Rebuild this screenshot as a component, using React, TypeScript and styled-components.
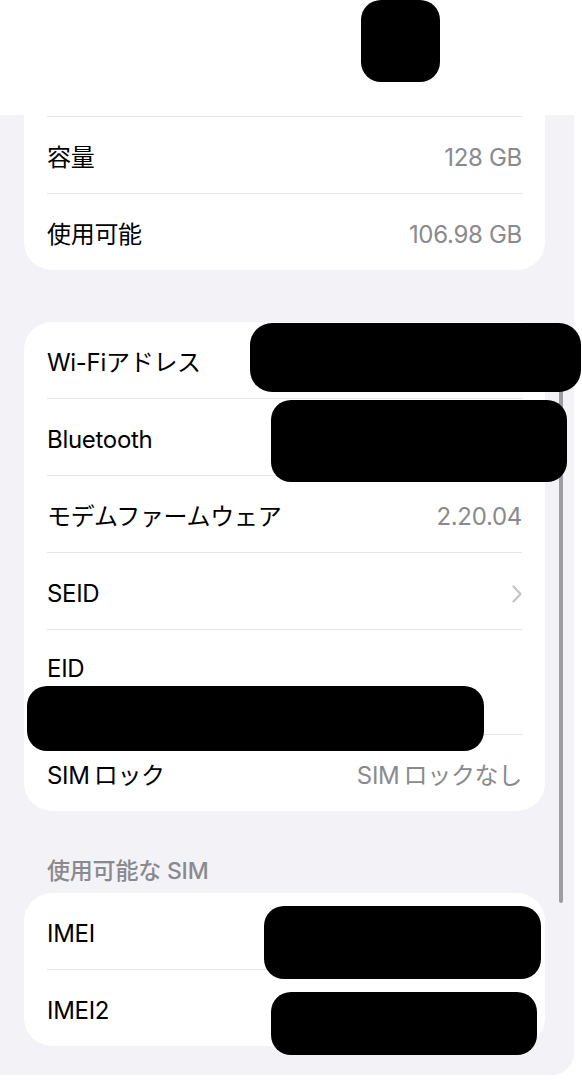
import React from "react";
import styled, { createGlobalStyle } from "styled-components";

const GlobalStyle = createGlobalStyle`
    html, body {
        margin: 0;
        padding: 0;
        background: #fff;
    }
    body {
        font-family: Inter, "Noto Sans CJK JP", sans-serif;
        -webkit-font-smoothing: antialiased;
    }
`;

type Item = { label: string; value?: string; chevron?: boolean; tall?: boolean };

const storage: Item[] = [
    { label: "容量", value: "128 GB" },
    { label: "使用可能", value: "106.98 GB" },
];

const network: Item[] = [
    { label: "Wi-Fiアドレス" },
    { label: "Bluetooth" },
    { label: "モデムファームウェア", value: "2.20.04" },
    { label: "SEID", chevron: true },
    { label: "EID", tall: true },
    { label: "SIM\u2009ロック", value: "SIM\u2009ロックなし" },
];

const sims: Item[] = [{ label: "IMEI" }, { label: "IMEI2" }];

// black boxes that hide private values in the screenshot
const redactions = [
    { left: 361, top: 0, width: 79, height: 82, radius: 20 },
    { left: 250, top: 323, width: 331, height: 69, radius: 22 },
    { left: 271, top: 400, width: 296, height: 82, radius: 20 },
    { left: 27, top: 686, width: 457, height: 65, radius: 20 },
    { left: 264, top: 906, width: 277, height: 73, radius: 20 },
    { left: 271, top: 992, width: 266, height: 63, radius: 20 },
];

const Chevron: React.FC = () => (
    <svg width="10" height="18" viewBox="0 0 10 18" fill="none">
        <path
            d="M1.5 1.5L8.5 9L1.5 16.5"
            stroke="#c4c4c8"
            strokeWidth="2.2"
            strokeLinecap="round"
            strokeLinejoin="round"
        />
    </svg>
);

const Rows: React.FC<{ items: Item[]; leadingDivider?: boolean }> = ({
    items,
    leadingDivider,
}) => (
    <>
        {items.map((item, i) =>
            item.tall ? (
                <TallRow key={item.label} $divider={i > 0 || !!leadingDivider}>
                    <Label>{item.label}</Label>
                    <HiddenValue />
                </TallRow>
            ) : (
                <Row key={item.label} $divider={i > 0 || !!leadingDivider}>
                    <Label>{item.label}</Label>
                    {item.value && <Value>{item.value}</Value>}
                    {item.chevron && <Chevron />}
                </Row>
            )
        )}
    </>
);

const App: React.FC = () => {
    return (
        <>
            <GlobalStyle />
            <Screen>
                <Header />
                <ScrollArea>
                    <Card $cutTop>
                        <Rows items={storage} leadingDivider />
                    </Card>
                    <Card $gap={52}>
                        <Rows items={network} />
                    </Card>
                    <SectionTitle>使用可能な SIM</SectionTitle>
                    <Card>
                        <Rows items={sims} />
                    </Card>
                </ScrollArea>
                <ScrollIndicator />
                {redactions.map((r, i) => (
                    <Redaction
                        key={i}
                        style={{
                            left: r.left,
                            top: r.top,
                            width: r.width,
                            height: r.height,
                            borderRadius: r.radius,
                        }}
                    />
                ))}
            </Screen>
        </>
    );
};

const Screen = styled.div`
    position: relative;
    width: 582px;
    height: 1080px;
    overflow: hidden;
    background: #fff;
    display: flex;
    flex-direction: column;
`;

const Header = styled.div`
    height: 115px;
    flex-shrink: 0;
    background: #fff;
`;

const ScrollArea = styled.div`
    width: 574px;
    height: 960px;
    flex-shrink: 0;
    box-sizing: border-box;
    padding: 0 29px 0 24px;
    background: #f2f2f7;
    border-bottom-right-radius: 22px;
    overflow: hidden;
    display: flex;
    flex-direction: column;
`;

const Card = styled.div<{ $cutTop?: boolean; $gap?: number }>`
    background: #fff;
    border-radius: ${(p) => (p.$cutTop ? "0 0 28px 28px" : "28px")};
    padding-top: ${(p) => (p.$cutTop ? "1px" : "0")};
    margin-top: ${(p) => p.$gap ?? 0}px;
    display: flex;
    flex-direction: column;
`;

const Row = styled.div<{ $divider?: boolean }>`
    margin: 0 23px;
    height: 71px;
    padding-top: 5px;
    display: flex;
    align-items: center;
    justify-content: space-between;
    border-top: ${(p) => (p.$divider ? "1px solid #e3e3e8" : "none")};
`;

const TallRow = styled.div<{ $divider?: boolean }>`
    margin: 0 23px;
    height: 105px;
    box-sizing: border-box;
    padding-top: 24px;
    display: flex;
    flex-direction: column;
    gap: 21px;
    border-top: ${(p) => (p.$divider ? "1px solid #e3e3e8" : "none")};
`;

const Label = styled.span`
    color: #000;
    font-size: 24px;
    line-height: 30px;
    letter-spacing: -0.3px;
    white-space: pre;
`;

const Value = styled.span`
    color: #8a8a8e;
    font-size: 24px;
    line-height: 30px;
    letter-spacing: -0.3px;
    white-space: pre;
`;

const HiddenValue = styled.div`
    height: 30px;
`;

const SectionTitle = styled.div`
    height: 82px;
    box-sizing: border-box;
    padding: 0 23px 8px;
    display: flex;
    align-items: flex-end;
    color: #8a8a8e;
    font-size: 23px;
    font-weight: 500;
    line-height: 28px;
    letter-spacing: -0.2px;
`;

const ScrollIndicator = styled.div`
    position: absolute;
    left: 559px;
    top: 380px;
    width: 4px;
    height: 523px;
    border-radius: 2px;
    background: #9d9da2;
`;

const Redaction = styled.div`
    position: absolute;
    background: #000;
`;

export default App;
